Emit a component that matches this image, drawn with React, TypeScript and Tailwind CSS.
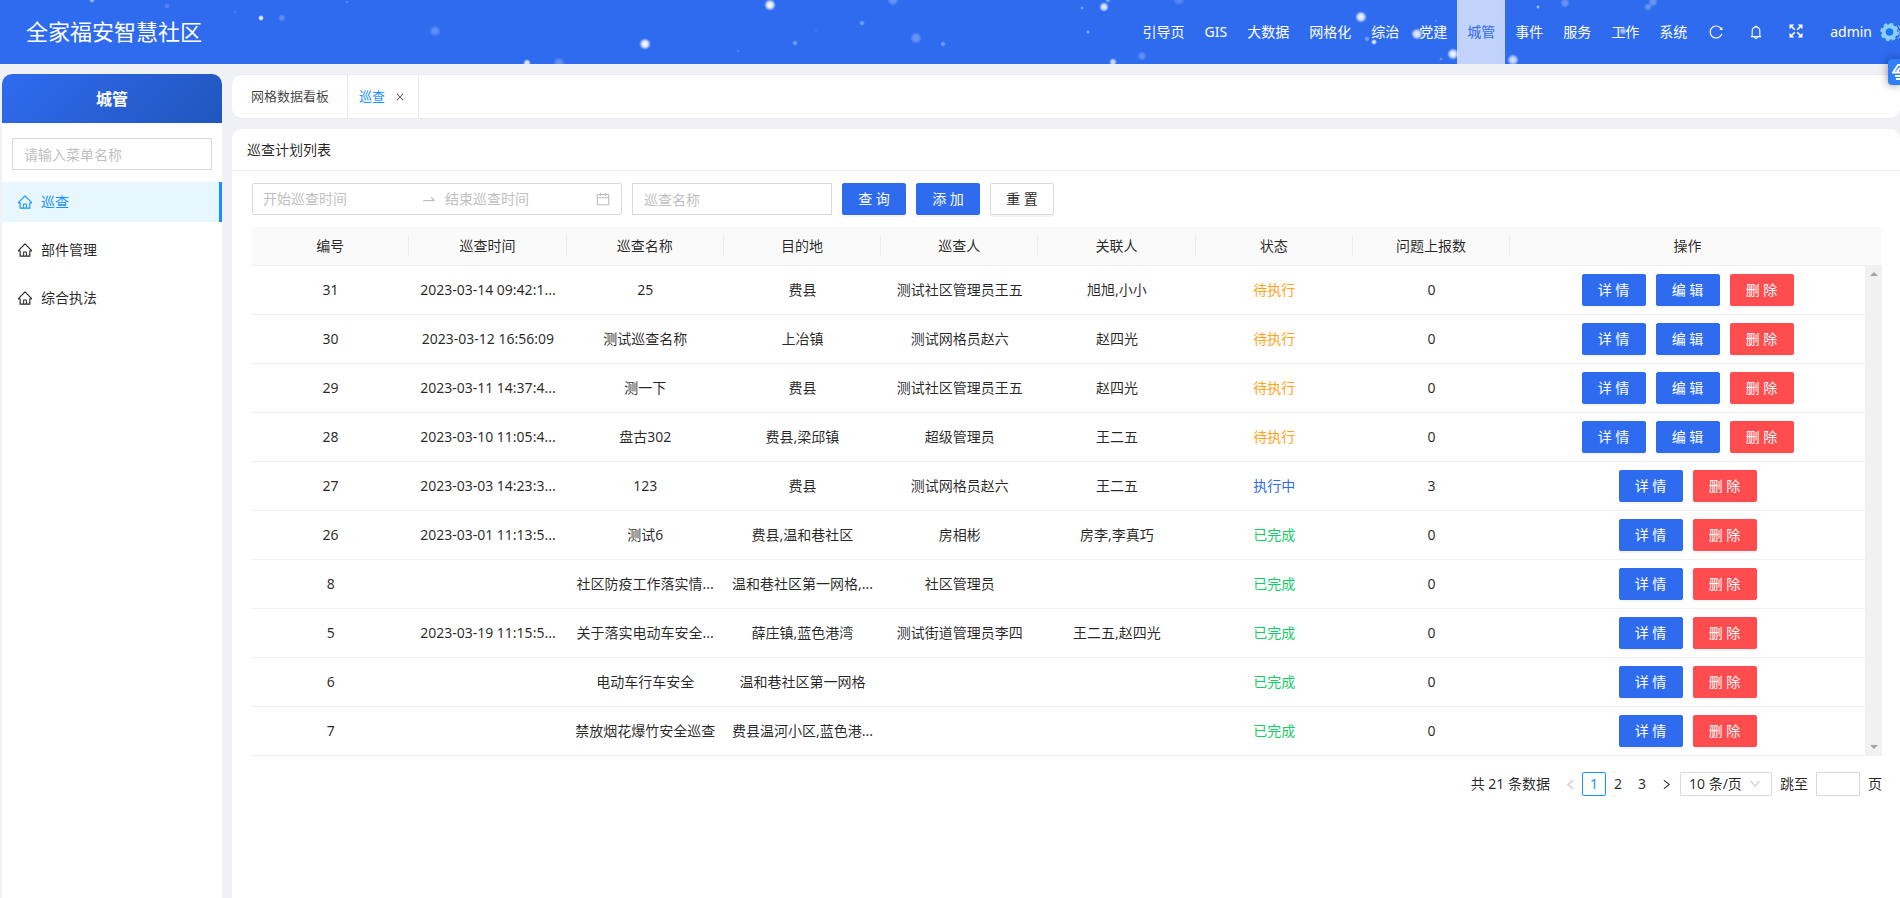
import { useState } from 'react';
import clsx from 'clsx';
import {
  AiOutlineBell,
  AiOutlineCalendar,
  AiOutlineClose,
  AiOutlineDown,
  AiOutlineHome,
  AiOutlineLeft,
  AiOutlineReload,
  AiOutlineRight,
  AiOutlineSwapRight,
} from 'react-icons/ai';

type Status = '待执行' | '执行中' | '已完成';

interface Plan {
  id: number;
  time: string;
  name: string;
  place: string;
  inspector: string;
  related: string;
  status: Status;
  reports: number;
}

const navItems = ['引导页', 'GIS', '大数据', '网格化', '综治', '党建', '城管', '事件', '服务', '工作', '系统'];

const menuItems = ['巡查', '部件管理', '综合执法'];

const columns = ['编号', '巡查时间', '巡查名称', '目的地', '巡查人', '关联人', '状态', '问题上报数', '操作'];

const plans: Plan[] = [
  { id: 31, time: '2023-03-14 09:42:1...', name: '25', place: '费县', inspector: '测试社区管理员王五', related: '旭旭,小小', status: '待执行', reports: 0 },
  { id: 30, time: '2023-03-12 16:56:09', name: '测试巡查名称', place: '上冶镇', inspector: '测试网格员赵六', related: '赵四光', status: '待执行', reports: 0 },
  { id: 29, time: '2023-03-11 14:37:4...', name: '测一下', place: '费县', inspector: '测试社区管理员王五', related: '赵四光', status: '待执行', reports: 0 },
  { id: 28, time: '2023-03-10 11:05:4...', name: '盘古302', place: '费县,梁邱镇', inspector: '超级管理员', related: '王二五', status: '待执行', reports: 0 },
  { id: 27, time: '2023-03-03 14:23:3...', name: '123', place: '费县', inspector: '测试网格员赵六', related: '王二五', status: '执行中', reports: 3 },
  { id: 26, time: '2023-03-01 11:13:5...', name: '测试6', place: '费县,温和巷社区', inspector: '房相彬', related: '房李,李真巧', status: '已完成', reports: 0 },
  { id: 8, time: '', name: '社区防疫工作落实情...', place: '温和巷社区第一网格,...', inspector: '社区管理员', related: '', status: '已完成', reports: 0 },
  { id: 5, time: '2023-03-19 11:15:5...', name: '关于落实电动车安全...', place: '薛庄镇,蓝色港湾', inspector: '测试街道管理员李四', related: '王二五,赵四光', status: '已完成', reports: 0 },
  { id: 6, time: '', name: '电动车行车安全', place: '温和巷社区第一网格', inspector: '', related: '', status: '已完成', reports: 0 },
  { id: 7, time: '', name: '禁放烟花爆竹安全巡查', place: '费县温河小区,蓝色港...', inspector: '', related: '', status: '已完成', reports: 0 },
];

const statusColor: Record<Status, string> = {
  待执行: 'text-[#ffa31a]',
  执行中: 'text-[#2f6bef]',
  已完成: 'text-[#13ce66]',
};

// x, y, radius, opacity
const snow: [number, number, number, number][] = [
  [92, 0, 3, 0.6], [167, 6, 3, 0.2], [235, 12, 1, 0.4], [261, 18, 3, 1], [282, 18, 4, 0.25],
  [347, 2, 1, 0.5], [435, 31, 6, 0.25], [527, 63, 4, 0.9], [559, 63, 6, 0.25], [645, 44, 6, 1],
  [738, 51, 1, 0.4], [770, 5, 6, 1], [795, 43, 3, 0.35], [816, 31, 3, 0.05], [862, 23, 3, 0.35],
  [893, 0, 6, 0.3], [916, 38, 6, 0.3], [943, 44, 3, 0.35], [1082, 8, 2, 0.4], [1088, 32, 2, 0.5],
  [1104, 7, 5, 0.9], [1108, 0, 3, 0.4], [1113, 62, 4, 0.8], [1142, 56, 5, 0.25], [1165, 38, 1, 0.5],
  [1179, 0, 6, 0.2], [1361, 17, 6, 0.95], [1367, 39, 3, 0.35], [1374, 42, 3, 0.9], [1417, 34, 6, 0.9],
  [1436, 21, 1, 0.5], [1441, 59, 2, 0.3], [1453, 54, 6, 0.95], [1513, 60, 6, 0.8], [1538, 7, 2, 0.6],
  [1565, 3, 5, 0.3], [1623, 31, 4, 0.6], [1648, 7, 4, 0.3], [1653, 2, 5, 0.3],
];

function Snow() {
  return (
    <svg className="pointer-events-none absolute inset-0 h-full w-full" aria-hidden="true">
      <defs>
        <radialGradient id="flake">
          <stop offset="0%" stopColor="#fff" />
          <stop offset="45%" stopColor="#fff" stopOpacity="0.85" />
          <stop offset="100%" stopColor="#fff" stopOpacity="0" />
        </radialGradient>
      </defs>
      {snow.map(([x, y, r, o]) => (
        <circle key={`${x}-${y}`} cx={x} cy={y} r={r} opacity={o} fill="url(#flake)" />
      ))}
    </svg>
  );
}

function FullscreenIcon() {
  return (
    <svg width="14" height="14" viewBox="0 0 14 14" fill="#fff" stroke="#fff" strokeWidth="1.6">
      <path d="M0.5 0.5h4.8l-4.8 4.8zM13.5 0.5v4.8l-4.8-4.8zM0.5 13.5v-4.8l4.8 4.8zM13.5 13.5h-4.8l4.8-4.8z" stroke="none" />
      <path d="M2 2l3.8 3.8M12 2l-3.8 3.8M2 12l3.8-3.8M12 12l-3.8-3.8" />
    </svg>
  );
}

function GearAvatar() {
  return (
    <svg width="20" height="20" viewBox="0 0 20 20" className="shrink-0">
      <circle cx="9.5" cy="10" r="10" fill="#1677f2" />
      <circle cx="9.5" cy="10" r="8" fill="none" stroke="#91cbff" strokeWidth="2.4" strokeDasharray="3.6 2.68" />
      <circle cx="9.5" cy="10" r="5.8" fill="none" stroke="#91cbff" strokeWidth="4" />
      <path d="M18 3l2 3M19 8v5M18 17l2-3" stroke="#91cbff" strokeWidth="1" fill="none" />
    </svg>
  );
}

function Header() {
  return (
    <header className="relative flex h-16 items-center justify-between overflow-hidden bg-[#2f6bef] pl-[26px] text-white">
      <Snow />
      <h1 className="relative text-[22px]">全家福安智慧社区</h1>
      <div className="relative flex h-full items-center">
        <nav className="flex h-full">
          {navItems.map((item) => (
            <a
              key={item}
              href="#"
              className={clsx('flex h-full items-center px-[10px]', item === '城管' && 'bg-white/70 text-[#2f6bef]')}
            >
              {item}
            </a>
          ))}
        </nav>
        <div className="flex gap-0.5">
          <button aria-label="刷新" className="flex w-[38px] justify-center">
            <AiOutlineReload size={16} />
          </button>
          <button aria-label="通知" className="flex w-[38px] justify-center">
            <AiOutlineBell size={16} />
          </button>
          <button aria-label="全屏" className="flex w-[38px] justify-center">
            <FullscreenIcon />
          </button>
        </div>
        <button className="flex items-center gap-2 pl-[15px]">
          admin
          <GearAvatar />
        </button>
      </div>
    </header>
  );
}

function Sidebar() {
  const [keyword, setKeyword] = useState('');

  return (
    <aside className="flex w-[220px] shrink-0 flex-col overflow-hidden rounded-t-[10px] bg-white">
      <h2 className="flex h-[49px] items-center justify-center bg-[linear-gradient(135deg,#2f6bef,#2156bd)] text-base font-bold text-white">
        城管
      </h2>
      <div className="px-[10px] pt-[15px] pb-3">
        <input
          aria-label="菜单名称"
          value={keyword}
          onChange={(e) => setKeyword(e.target.value)}
          placeholder="请输入菜单名称"
          className="h-8 w-full border border-[#d9d9d9] px-[11px] outline-none placeholder:text-[#bfbfbf]"
        />
      </div>
      <ul className="flex flex-col gap-2">
        {menuItems.map((item, i) => (
          <li key={item}>
            <a
              href="#"
              className={clsx(
                'flex h-10 items-center gap-2 pl-[15px]',
                i === 0 && 'border-r-3 border-[#1890ff] bg-[#e6f7ff] text-[#1890ff]',
              )}
            >
              <AiOutlineHome size={16} />
              {item}
            </a>
          </li>
        ))}
      </ul>
    </aside>
  );
}

function TabsBar() {
  return (
    <div className="flex h-[45px] overflow-hidden rounded-[10px] border-y border-[#e8eaee] bg-white text-[13px]">
      <button className="border-r border-[#e8eaee] pr-[18px] pl-[19px] text-black/75">网格数据看板</button>
      <div className="flex items-center gap-[10px] border-r border-[#e8eaee] pr-[13px] pl-[11px]">
        <button className="text-[#1890ff]">巡查</button>
        <button aria-label="关闭" className="text-black/70">
          <AiOutlineClose size={10} />
        </button>
      </div>
    </div>
  );
}

function Button({ text, kind = 'primary' }: { text: string; kind?: 'primary' | 'danger' | 'default' }) {
  return (
    <button
      className={clsx(
        'h-8 w-16 rounded-xs border whitespace-nowrap shadow-[0_2px_0_rgba(0,0,0,0.04)]',
        kind === 'primary' && 'border-[#2f6bef] bg-[#2f6bef] text-white',
        kind === 'danger' && 'border-[#ff4d4f] bg-[#ff4d4f] text-white',
        kind === 'default' && 'border-[#d9d9d9] bg-white',
      )}
    >
      {text}
    </button>
  );
}

function SearchForm() {
  return (
    <form className="flex gap-[10px]" onSubmit={(e) => e.preventDefault()}>
      <div className="flex h-8 w-[370px] items-center rounded-xs border border-[#d9d9d9] px-[10px] text-[#bfbfbf]">
        <input
          aria-label="开始巡查时间"
          placeholder="开始巡查时间"
          className="w-0 flex-1 outline-none placeholder:text-[#bfbfbf]"
        />
        <AiOutlineSwapRight size={16} className="mx-2" />
        <input
          aria-label="结束巡查时间"
          placeholder="结束巡查时间"
          className="w-0 flex-1 outline-none placeholder:text-[#bfbfbf]"
        />
        <AiOutlineCalendar size={16} />
      </div>
      <input
        aria-label="巡查名称"
        placeholder="巡查名称"
        className="h-8 w-[200px] border border-[#d9d9d9] px-[11px] outline-none placeholder:text-[#bfbfbf]"
      />
      <Button text="查 询" />
      <Button text="添 加" />
      <Button text="重 置" kind="default" />
    </form>
  );
}

function PlanTable() {
  const cell = 'h-[49px] border-b border-[#f0f0f0] px-2 py-0 whitespace-nowrap';

  return (
    <div className="flex">
      <table className="w-0 flex-1 table-fixed border-separate border-spacing-0 text-center">
        <thead>
          <tr>
            {columns.map((col, i) => (
              <th
                key={col}
                className={clsx(
                  'h-[39px] border-b border-[#f0f0f0] bg-[#fafafa] p-0 font-normal',
                  i === columns.length - 1 && 'w-[22%]',
                )}
              >
                <div className={clsx('leading-[22px]', i < columns.length - 1 && 'border-r border-[#ececec]')}>
                  {col}
                </div>
              </th>
            ))}
          </tr>
        </thead>
        <tbody>
          {plans.map((plan) => (
            <tr key={plan.id}>
              <td className={cell}>{plan.id}</td>
              <td className={cell}>{plan.time}</td>
              <td className={cell}>{plan.name}</td>
              <td className={cell}>{plan.place}</td>
              <td className={cell}>{plan.inspector}</td>
              <td className={cell}>{plan.related}</td>
              <td className={clsx(cell, statusColor[plan.status])}>{plan.status}</td>
              <td className={cell}>{plan.reports}</td>
              <td className={cell}>
                <div className="flex justify-center gap-[10px]">
                  <Button text="详 情" />
                  {plan.status === '待执行' && <Button text="编 辑" />}
                  <Button text="删 除" kind="danger" />
                </div>
              </td>
            </tr>
          ))}
        </tbody>
      </table>
      {/* Scrollbar track */}
      <div className="flex w-[17px] flex-col">
        <div className="h-[38px] bg-[#fafafa]" />
        <div className="flex flex-1 flex-col items-center justify-between bg-[#f1f1f1] py-[7px]">
          <svg width="8" height="4" viewBox="0 0 8 4" fill="#a3a3a3">
            <path d="M0 4l4-4 4 4z" />
          </svg>
          <svg width="8" height="4" viewBox="0 0 8 4" fill="#a3a3a3">
            <path d="M0 0l4 4 4-4z" />
          </svg>
        </div>
      </div>
    </div>
  );
}

function Pagination() {
  const [page, setPage] = useState(1);

  return (
    <div className="mt-4 flex h-6 items-center justify-end gap-0.5">
      <span className="mr-1.5">共 21 条数据</span>
      <button aria-label="上一页" disabled className="flex h-6 w-6 items-center justify-center text-black/25">
        <AiOutlineLeft size={13} />
      </button>
      <div className="-mx-0.5 flex">
        {[1, 2, 3].map((n) => (
          <button
            key={n}
            onClick={() => setPage(n)}
            className={clsx(
              'flex h-6 w-6 items-center justify-center rounded-xs border',
              n === page ? 'border-[#1890ff] text-[#1890ff]' : 'border-transparent',
            )}
          >
            {n}
          </button>
        ))}
      </div>
      <button aria-label="下一页" className="flex h-6 w-6 items-center justify-center">
        <AiOutlineRight size={13} />
      </button>
      <div className="relative">
        <select
          aria-label="每页条数"
          className="block h-6 w-[92px] appearance-none rounded-xs border border-[#d9d9d9] bg-white pl-2 outline-none"
        >
          <option>10 条/页</option>
          <option>20 条/页</option>
          <option>50 条/页</option>
        </select>
        <AiOutlineDown size={12} className="pointer-events-none absolute top-1.5 right-[11px] text-black/25" />
      </div>
      <label htmlFor="jump" className="mx-1.5">
        跳至
      </label>
      <input id="jump" className="h-6 w-11 border border-[#d9d9d9] px-2 outline-none" />
      <span className="ml-1.5">页</span>
    </div>
  );
}

export default function App() {
  return (
    <div className="relative flex min-h-screen flex-col overflow-hidden bg-[#f0f1f5] font-['Noto_Sans','Noto_Sans_CJK_SC',sans-serif] text-sm text-black/85">
      <Header />
      <div className="flex flex-1 gap-[10px] pt-[10px] pl-0.5">
        <Sidebar />
        <main className="flex min-w-0 flex-1 flex-col gap-[10px]">
          <TabsBar />
          <section className="flex-1 rounded-t-[10px] bg-white">
            <h3 className="flex h-[42px] items-center border-b border-[#f0f0f0] px-[15px]">巡查计划列表</h3>
            <div className="flex flex-col gap-3 pt-3 pr-[18px] pl-5">
              <SearchForm />
              <div>
                <PlanTable />
                <Pagination />
              </div>
            </div>
          </section>
        </main>
      </div>
      {/* Floating assistant handle */}
      <button
        aria-label="助手"
        className="absolute top-[59px] right-0 flex h-[26px] w-3 items-center overflow-hidden rounded-l-sm bg-[#2f7ffb] pl-1 shadow-[0_0_8px_rgba(0,0,0,0.45)]"
      >
        <svg width="16" height="16" viewBox="0 0 16 16" fill="none" stroke="#fff" strokeWidth="2" className="shrink-0">
          <path d="M14 1H6L1 8.5h14M5 7.5l2.5-3H14" />
          <path d="M3 12h13M4 15h11" />
        </svg>
      </button>
    </div>
  );
}
